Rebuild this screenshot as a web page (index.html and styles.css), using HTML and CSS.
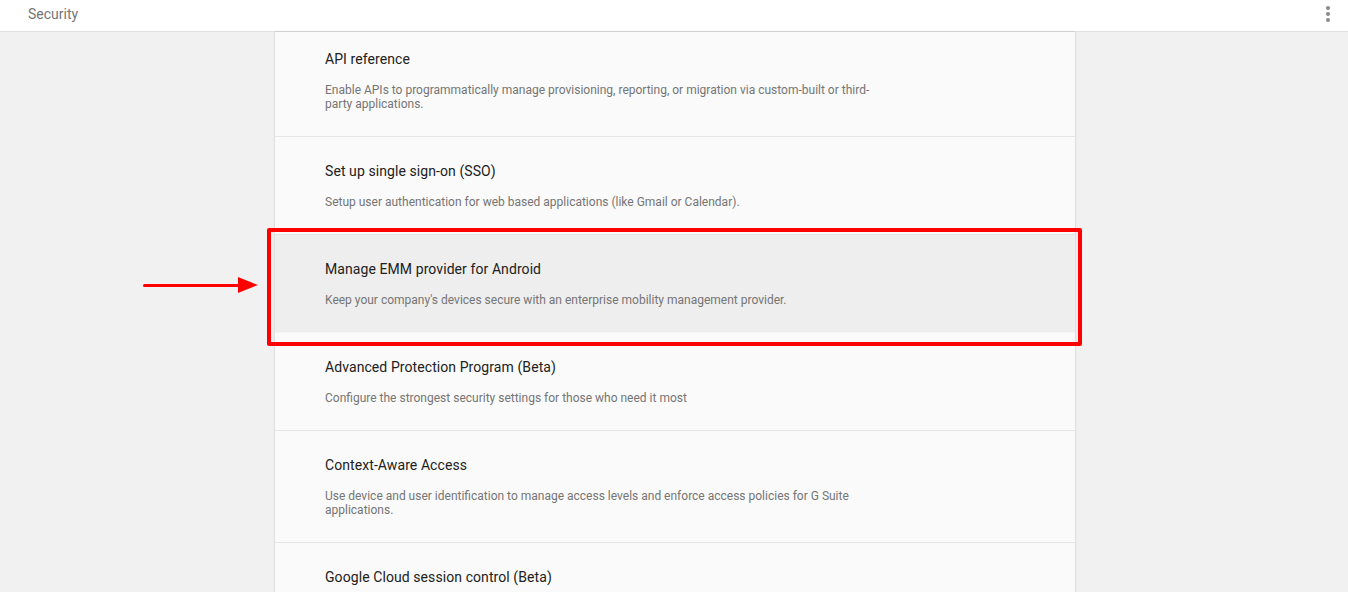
FILE: index.html
```html
<!DOCTYPE html>
<html>
<head>
<meta charset="utf-8">
<link rel="stylesheet" href="styles.css">
</head>
<body>
<header class="topbar">
  <span class="topbar-title">Security</span>
  <span class="more" aria-label="More"><i></i><i></i><i></i></span>
</header>
<main class="page">
  <section class="card">
    <div class="row row-first">
      <div class="row-title">API reference</div>
      <div class="row-desc">Enable APIs to programmatically manage provisioning, reporting, or migration via custom-built or third-party applications.</div>
    </div>
    <div class="row">
      <div class="row-title">Set up single sign-on (SSO)</div>
      <div class="row-desc">Setup user authentication for web based applications (like Gmail or Calendar).</div>
    </div>
    <div class="row row-active">
      <div class="row-title">Manage EMM provider for Android</div>
      <div class="row-desc">Keep your company's devices secure with an enterprise mobility management provider.</div>
      <div class="highlight-box"></div>
      <div class="arrow"><span class="arrow-line"></span><span class="arrow-head"></span></div>
    </div>
    <div class="row">
      <div class="row-title">Advanced Protection Program (Beta)</div>
      <div class="row-desc">Configure the strongest security settings for those who need it most</div>
    </div>
    <div class="row">
      <div class="row-title">Context-Aware Access</div>
      <div class="row-desc">Use device and user identification to manage access levels and enforce access policies for G Suite applications.</div>
    </div>
    <div class="row row-last">
      <div class="row-title">Google Cloud session control (Beta)</div>
    </div>
  </section>
</main>
</body>
</html>
```

FILE: styles.css
```css
html, body {
  margin: 0;
  padding: 0;
  height: 100%;
  overflow: hidden;
}
body {
  background: #f1f1f1;
  font-family: Roboto, "Liberation Sans", Arial, sans-serif;
}
.topbar {
  height: 31px;
  background: #ffffff;
  border-bottom: 1px solid #e0e0e0;
  display: flex;
  align-items: center;
  justify-content: space-between;
  padding: 0 18px 0 28px;
}
.topbar-title {
  font-size: 14px;
  color: #757575;
  line-height: 20px;
  margin-top: -3px;
}
.more {
  display: flex;
  flex-direction: column;
  gap: 2px;
  margin-top: -3px;
}
.more i {
  display: block;
  width: 4px;
  height: 4px;
  border-radius: 50%;
  background: #8a8a8a;
}
.page {
  display: flex;
  justify-content: center;
}
.card {
  width: 800px;
  background: #fafafa;
  box-shadow: 0 0 2px rgba(0, 0, 0, 0.22);
  margin-left: 2px;
}
.row {
  position: relative;
  padding: 24px 50px 25px 50px;
  border-bottom: 1px solid #e6e6e6;
}
.row-first {
  padding-top: 17px;
}
.row-last {
  padding-bottom: 40px;
}
.row-active {
  background: #eeeeee;
  border-top: 1px solid #e4e4e4;
  margin-top: -1px;
  border-bottom-color: #f5f5f5;
}
.row-title {
  font-size: 14px;
  line-height: 20px;
  color: #212121;
  letter-spacing: 0.08px;
}
.row-desc {
  margin-top: 14px;
  font-size: 12px;
  line-height: 14px;
  color: #757575;
  max-width: 552px;
}
.highlight-box {
  position: absolute;
  left: -8px;
  right: -7px;
  top: -7px;
  bottom: -14px;
  border: 4px solid #ff0000;
  border-radius: 2px;
  pointer-events: none;
}
.arrow {
  position: absolute;
  left: -132px;
  top: 42px;
  display: flex;
  align-items: center;
}
.arrow-line {
  display: block;
  width: 96px;
  height: 3px;
  background: #ff0000;
  border-radius: 2px;
}
.arrow-head {
  display: block;
  width: 0;
  height: 0;
  border-top: 8px solid transparent;
  border-bottom: 8px solid transparent;
  border-left: 20px solid #ff0000;
  margin-left: -1px;
}
```
